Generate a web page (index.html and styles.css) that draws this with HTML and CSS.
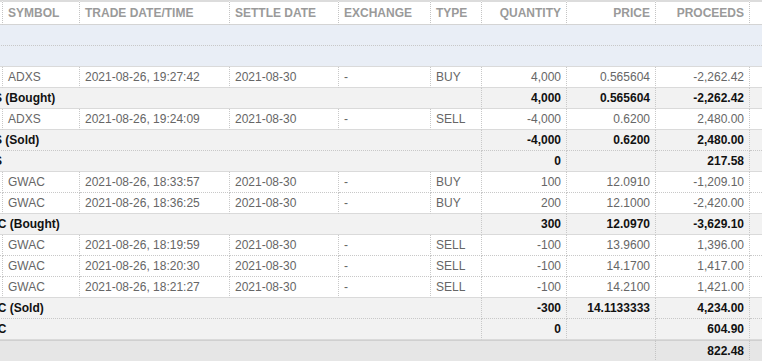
FILE: index.html
```html
<!DOCTYPE html>
<html lang="en">
<head>
<meta charset="utf-8">
<title>Trades</title>
<link rel="stylesheet" href="styles.css">
</head>
<body>
<div class="viewport">
<table class="trades">
  <colgroup>
    <col class="c-label"><col class="c-symbol"><col class="c-trade"><col class="c-settle"><col class="c-exch"><col class="c-type"><col class="c-qty"><col class="c-price"><col class="c-proc"><col class="c-extra">
  </colgroup>
  <thead>
    <tr>
      <th></th>
      <th>Symbol</th>
      <th>Trade Date/Time</th>
      <th>Settle Date</th>
      <th>Exchange</th>
      <th>Type</th>
      <th class="num">Quantity</th>
      <th class="num">Price</th>
      <th class="num">Proceeds</th>
      <th class="last"></th>
    </tr>
  </thead>
  <tbody>
    <tr class="cat"><td colspan="10">&nbsp;</td></tr>
    <tr class="cat end"><td colspan="10">&nbsp;</td></tr>

    <tr class="data end"><td></td><td>ADXS</td><td>2021-08-26, 19:27:42</td><td>2021-08-30</td><td>-</td><td>BUY</td><td class="num">4,000</td><td class="num">0.565604</td><td class="num">-2,262.42</td><td class="last"></td></tr>
    <tr class="sub end"><td colspan="6" class="label">Total ADXS (Bought)</td><td class="num">4,000</td><td class="num">0.565604</td><td class="num">-2,262.42</td><td class="last"></td></tr>

    <tr class="data end"><td></td><td>ADXS</td><td>2021-08-26, 19:24:09</td><td>2021-08-30</td><td>-</td><td>SELL</td><td class="num">-4,000</td><td class="num">0.6200</td><td class="num">2,480.00</td><td class="last"></td></tr>
    <tr class="sub"><td colspan="6" class="label">Total ADXS (Sold)</td><td class="num">-4,000</td><td class="num">0.6200</td><td class="num">2,480.00</td><td class="last"></td></tr>
    <tr class="sub end"><td colspan="6" class="label">Total ADXS</td><td class="num">0</td><td class="num"></td><td class="num">217.58</td><td class="last"></td></tr>

    <tr class="data"><td></td><td>GWAC</td><td>2021-08-26, 18:33:57</td><td>2021-08-30</td><td>-</td><td>BUY</td><td class="num">100</td><td class="num">12.0910</td><td class="num">-1,209.10</td><td class="last"></td></tr>
    <tr class="data end"><td></td><td>GWAC</td><td>2021-08-26, 18:36:25</td><td>2021-08-30</td><td>-</td><td>BUY</td><td class="num">200</td><td class="num">12.1000</td><td class="num">-2,420.00</td><td class="last"></td></tr>
    <tr class="sub end"><td colspan="6" class="label">Total GWAC (Bought)</td><td class="num">300</td><td class="num">12.0970</td><td class="num">-3,629.10</td><td class="last"></td></tr>

    <tr class="data"><td></td><td>GWAC</td><td>2021-08-26, 18:19:59</td><td>2021-08-30</td><td>-</td><td>SELL</td><td class="num">-100</td><td class="num">13.9600</td><td class="num">1,396.00</td><td class="last"></td></tr>
    <tr class="data"><td></td><td>GWAC</td><td>2021-08-26, 18:20:30</td><td>2021-08-30</td><td>-</td><td>SELL</td><td class="num">-100</td><td class="num">14.1700</td><td class="num">1,417.00</td><td class="last"></td></tr>
    <tr class="data end"><td></td><td>GWAC</td><td>2021-08-26, 18:21:27</td><td>2021-08-30</td><td>-</td><td>SELL</td><td class="num">-100</td><td class="num">14.2100</td><td class="num">1,421.00</td><td class="last"></td></tr>
    <tr class="sub"><td colspan="6" class="label">Total GWAC (Sold)</td><td class="num">-300</td><td class="num">14.1133333</td><td class="num">4,234.00</td><td class="last"></td></tr>
    <tr class="sub end"><td colspan="6" class="label">Total GWAC</td><td class="num">0</td><td class="num"></td><td class="num">604.90</td><td class="last"></td></tr>

    <tr class="grand"><td colspan="8"></td><td class="num">822.48</td><td class="last"></td></tr>
  </tbody>
</table>
</div>
</body>
</html>
```

FILE: styles.css
```css
html, body {
  margin: 0;
  padding: 0;
  background: #ffffff;
}

body {
  font-family: "Liberation Sans", Arial, Helvetica, sans-serif;
}

.viewport {
  width: 762px;
  height: 361px;
  overflow: hidden;
}

.trades {
  border-collapse: separate;
  border-spacing: 0;
  table-layout: fixed;
  width: 927px;
  margin-left: -77px;
  font-size: 12px;
}

.c-label { width: 80px; }
.c-symbol { width: 77px; }
.c-trade { width: 150px; }
.c-settle { width: 109px; }
.c-exch { width: 92px; }
.c-type { width: 51px; }
.c-qty { width: 85px; }
.c-price { width: 89px; }
.c-proc { width: 94px; }
.c-extra { width: 100px; }

.trades th,
.trades td {
  padding: 0 5px;
  white-space: nowrap;
  overflow: hidden;
  text-align: left;
  box-sizing: border-box;
}

.trades th {
  height: 25px;
  line-height: 22px;
  border-top: 2px solid #dcdcdc;
  border-bottom: 1px solid #d4d4d4;
  border-right: 1px dotted #c4c4c4;
  color: #9a9a9a;
  font-weight: bold;
  text-transform: uppercase;
  background: #ffffff;
}

.trades td {
  height: 21px;
  line-height: 20px;
  border-bottom: 1px dotted #c8c8c8;
}

.trades .num {
  text-align: right;
}

.trades .last {
  border-right: none;
}

.cat td {
  background: #e9eef6;
}

.data td {
  background: #ffffff;
  color: #666666;
  border-right: 1px dotted #c8c8c8;
}

.sub td {
  background: #f2f2f2;
  color: #111111;
  font-weight: bold;
  border-right: 1px dotted #c8c8c8;
}

.sub td.label {
  padding-left: 15px;
  overflow: visible;
}

.trades tr.end td {
  border-bottom: 1px solid #dadada;
}

.grand td {
  background: #e6e6e6;
  color: #111111;
  font-weight: bold;
  border-top: 1px solid #d0d0d0;
  border-bottom: 1px solid #d0d0d0;
  border-right: 1px dotted #c4c4c4;
}

.sub td.last,
.data td.last,
.grand td.last {
  border-right: none;
}
```
